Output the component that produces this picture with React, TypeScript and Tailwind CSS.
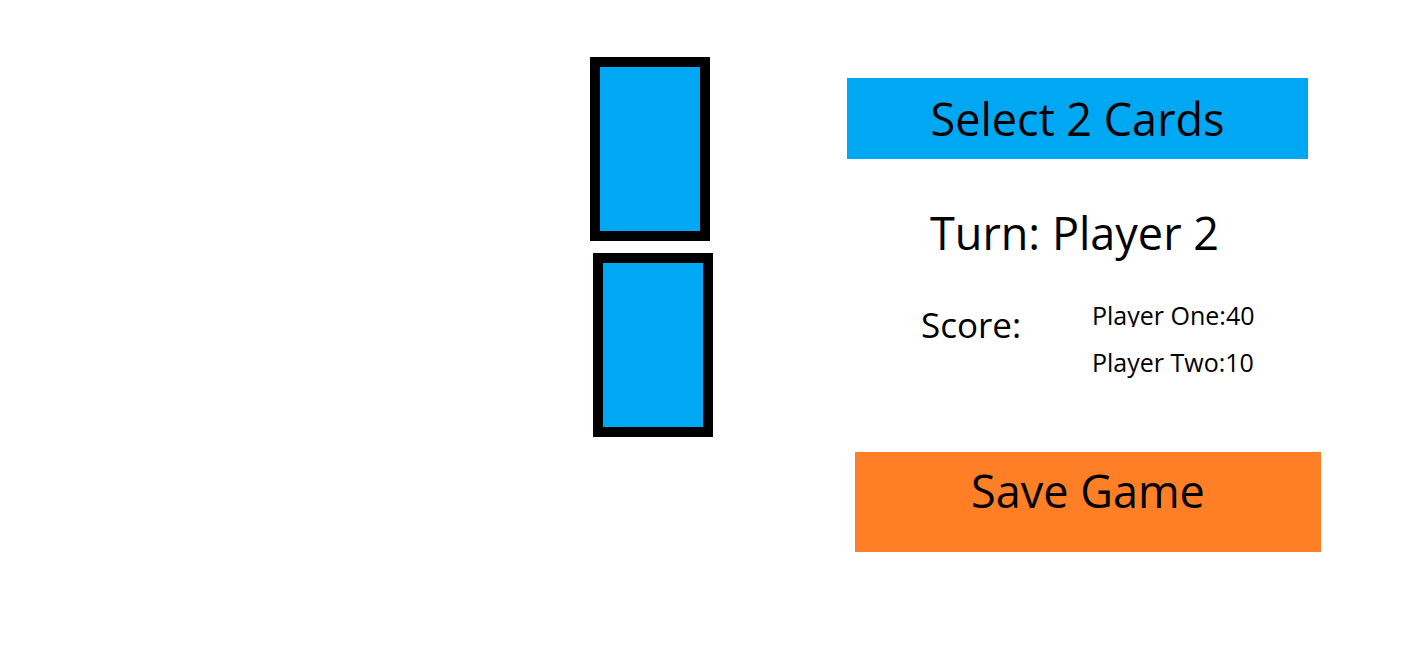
const cards = [
  { id: 1, place: "self-start" },
  { id: 2, place: "self-end" },
];

const scores = [
  { name: "Player One", points: 40, size: "h-[27px] overflow-hidden" },
  { name: "Player Two", points: 10, size: "h-[30px]" },
];

function Card({ id, place }: { id: number; place: string }) {
  return (
    <button
      type="button"
      aria-label={`Card ${id}`}
      className={`h-[184px] w-[120px] border-10 border-black bg-[#00a8f3] ${place}`}
    />
  );
}

export default function App() {
  return (
    <main className="flex min-h-screen justify-end gap-[134px] bg-white pt-[57px] pr-[95px] font-['Open_Sans',sans-serif] text-black">
      <section className="flex w-[123px] shrink-0 flex-col gap-3">
        {cards.map((card) => (
          <Card key={card.id} {...card} />
        ))}
      </section>
      <section className="flex w-[474px] shrink-0 flex-col pt-[21px]">
        <button type="button" className="h-[81px] w-[461px] bg-[#00a8f3] text-[45px] leading-[80px]">
          Select 2 Cards
        </button>
        <h1 className="mt-10 pl-[83px] text-[45px] leading-[68px]">Turn: Player 2</h1>
        <div className="mt-[33px] flex items-start">
          <h2 className="w-[245px] pl-[74px] text-[35px] leading-[50px]">Score:</h2>
          <ul className="flex flex-col gap-5 text-[25px] leading-[30px]">
            {scores.map(({ name, points, size }) => (
              <li key={name} className={size}>{`${name}:${points}`}</li>
            ))}
          </ul>
        </div>
        <button
          type="button"
          className="mt-[75px] h-[100px] w-[466px] self-end bg-[#ff7f27] pb-[22px] text-[45px]"
        >
          Save Game
        </button>
      </section>
    </main>
  );
}
